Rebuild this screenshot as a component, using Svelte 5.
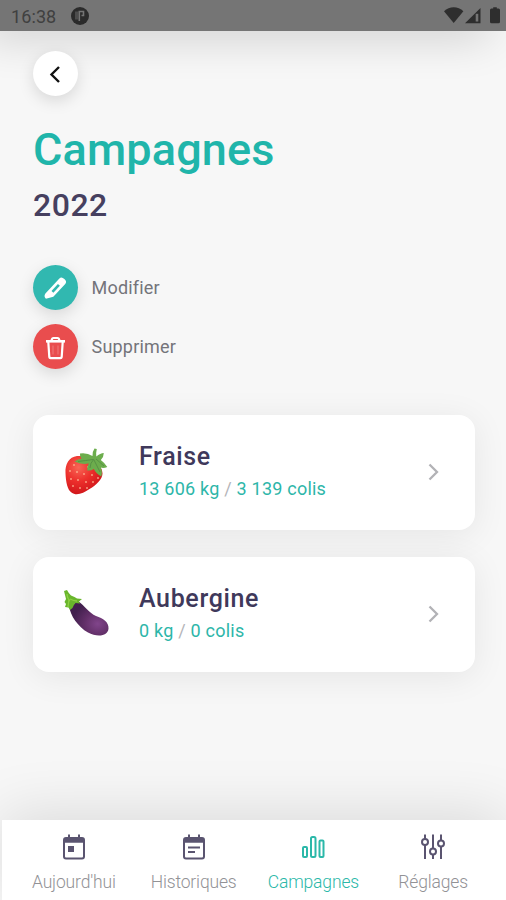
<script lang="ts">
	type Tab = 'today' | 'history' | 'campaigns' | 'settings';

	interface Crop {
		id: string;
		name: string;
		weight: string;
		packages: string;
	}

	const crops: Crop[] = [
		{ id: 'strawberry', name: 'Fraise', weight: '13 606 kg', packages: '3 139 colis' },
		{ id: 'eggplant', name: 'Aubergine', weight: '0 kg', packages: '0 colis' }
	];

	const tabs: { id: Tab; label: string }[] = [
		{ id: 'today', label: "Aujourd'hui" },
		{ id: 'history', label: 'Historiques' },
		{ id: 'campaigns', label: 'Campagnes' },
		{ id: 'settings', label: 'Réglages' }
	];

	// x, y of each strawberry seed
	const seeds = [
		[10, 18], [17, 15], [24, 20], [6, 24], [13, 25], [20, 27], [28, 28], [34, 31],
		[7, 32], [14, 33], [22, 35], [29, 35], [9, 39], [16, 41], [23, 41]
	];

	let activeTab = $state<Tab>('campaigns');
</script>

<div class="screen">
	<header class="status-bar">
		<span class="time">16:38</span>
		<svg class="app-dot" width="18" height="18" viewBox="0 0 18 18">
			<circle cx="9" cy="9" r="9" fill="#2b2b2b" />
			<path d="M4 4.500h3.200v8H4z" fill="#4c4c4c" />
			<path d="M8.300 14V4.500h4.200v4h-2" fill="none" stroke="#747474" stroke-width="1.600" />
		</svg>
		<svg class="system" width="58" height="18" viewBox="0 0 58 18" fill="#2e2e2e">
			<path d="M0 4.2C5.5-1 14-1 19.4 4.2L9.7 16z" />
			<path d="M21 16.2 36.5 1v15.2z" />
			<path d="M33 6.800v7.700" stroke="#747474" stroke-width="2.600" />
			<path d="M46 3q0-1.5 1.5-1.5h1.7V.2h3.6v1.3h1.7Q56 1.500 56 3v11.700q0 1.500-1.500 1.500h-7Q46 16.200 46 14.700z" />
		</svg>
	</header>

	<main class="content">
		<button class="round back" aria-label="Retour">
			<svg width="45" height="45" viewBox="0 0 45 45" fill="none" stroke="#111" stroke-width="2.400">
				<path d="m26 16-7.500 7.500L26 31" />
			</svg>
		</button>

		<h1>Campagnes</h1>
		<h2>2022</h2>

		<div class="actions">
			<button class="action">
				<span class="round edit">
					<svg width="45" height="45" viewBox="0 0 45 45">
						<g transform="rotate(43 22.500 23.500)">
							<path d="M18.500 13.500q0-3 4-3t4 3v17.500l-4 6.500q-3.500 0-4-3.500z" fill="#fff" />
							<path d="M22.500 18.500v9.500" stroke="#31b8b0" stroke-width="2.600" />
						</g>
					</svg>
				</span>
				<span>Modifier</span>
			</button>
			<button class="action">
				<span class="round delete">
					<svg width="45" height="45" viewBox="0 0 45 45" fill="none" stroke="#fff" stroke-width="2.200" stroke-linejoin="round">
						<path d="M13 17.300h19" stroke-width="2.600" />
						<path d="M18.500 16.500q.5-2.500 2-2.500h4q1.500 0 2 2.500" />
						<path d="M15.300 18l1 15q.2 1.200 1.200 1.200h10q1 0 1.200-1.200l1-15" />
						<path d="M20 21.500v9M25 21.500v9" stroke="#f07a79" stroke-width="1" />
					</svg>
				</span>
				<span>Supprimer</span>
			</button>
		</div>

		<div class="cards">
			{#each crops as crop (crop.id)}
				<article class="card">
					{#if crop.id === 'strawberry'}
						<svg class="crop" width="46" height="50" viewBox="0 0 46 50">
							<defs>
								<radialGradient id="berry" cx=".35" cy=".3" r=".8">
									<stop offset="0" stop-color="#f86656" />
									<stop offset=".45" stop-color="#ed302c" />
									<stop offset="1" stop-color="#c90f16" />
								</radialGradient>
							</defs>
							<path d="M13 9C5 10 1 17 1.500 26c.3 9 2 17 6 19.500 5 4 12 .5 18-3.500 7-4 13-10 13-15.500 0-8-10-18-25.500-17.500z" fill="url(#berry)" />
							{#each seeds as [x, y]}
								<ellipse cx={x} cy={y} rx=".75" ry="1.050" fill="#ffc09b" />
							{/each}
							<path d="M28.500 9Q28.500 4 30.500 1.500l2.300.5q-1 4-.5 7.500 4-3.500 7.500-3.500 0 4-3 7 4 3 6.500 7-4 1.500-6.500.5 2 5 .5 9-5-2.500-7.500-7.500-3 2-6.500 1.500-.5-4 1.500-7Q17 18 10.500 14.500q3.500-2.500 7-2.800-2-2.200-1.500-5.200Q23 5.500 28.500 9z" fill="#6cad4d" />
							<path d="M14 14.500q8-1 15-2M30 13l6 12M32 12l8 7M30 12q-4 4-4 9" stroke="#558f43" stroke-width=".9" fill="none" />
						</svg>
					{:else}
						<svg class="crop" width="46" height="50" viewBox="0 0 46 50">
							<defs>
								<radialGradient id="plum" cx=".72" cy=".66" r=".65">
									<stop offset="0" stop-color="#81458b" />
									<stop offset=".5" stop-color="#633069" />
									<stop offset="1" stop-color="#42204e" />
								</radialGradient>
							</defs>
							<path d="M5.500 18C6 26 14 38 24 43.500c9 5 20 4 20.500-4C45 33 39 29.500 32 27 25 24 21 17 14 12z" fill="url(#plum)" />
							<path d="M0 2 3 1q2 4 4 5.500Q11 8 13 9.500l5 .5-3 2.500 1 2-4.500-.5q-2 2-3 5L6 21l-1.500-2.500-3.500-.5 1-3-1.500-2 1.500-3Q1 6 0 2z" fill="#69b62c" />
							<path d="M3 5q.5 5 3 7M5 10l-1 8M6 10q4 2 7 2" stroke="#8ed043" stroke-width="1.300" fill="none" />
						</svg>
					{/if}
					<div class="details">
						<h3>{crop.name}</h3>
						<p>{crop.weight} <span>/</span> {crop.packages}</p>
					</div>
					<svg width="12" height="18" viewBox="0 0 12 18" fill="none" stroke="#b2b2b6" stroke-width="2.300">
						<path d="m1.500 1.500 7.500 7.500-7.500 7.500" />
					</svg>
				</article>
			{/each}
		</div>
	</main>

	<nav class="tab-bar">
		{#each tabs as tab (tab.id)}
			<button class="tab" class:active={activeTab === tab.id} onclick={() => (activeTab = tab.id)}>
				<svg width="26" height="28" viewBox="0 0 26 28" fill="none" stroke="currentColor" stroke-width="2">
					{#if tab.id === 'today' || tab.id === 'history'}
						<rect x="3" y="5" width="20" height="20.500" rx="2" />
						<path d="M3 7.500h20" stroke-width="4.500" />
						<path d="M8 1.500V6M18 1.500V6" />
						{#if tab.id === 'today'}
							<rect x="7" y="13" width="6" height="6" fill="currentColor" stroke="none" />
						{:else}
							<path d="M7 14.500h12M7 19h7" />
						{/if}
					{:else if tab.id === 'campaigns'}
						<rect x="3" y="14" width="4" height="10" rx="1" />
						<rect x="11" y="4" width="4.500" height="20" rx="1.500" />
						<rect x="19.500" y="7.500" width="4" height="16.500" rx="1" />
					{:else}
						<path d="M5 1.500v4.500m0 6v14M13 1.500v14m0 6v4.500M21 1.500v6m0 6v12.500" />
						<circle cx="5" cy="9" r="3" />
						<circle cx="13" cy="18.500" r="3" />
						<circle cx="21" cy="10.500" r="3" />
					{/if}
				</svg>
				<span>{tab.label}</span>
			</button>
		{/each}
	</nav>
</div>

<style>
	:global(body) {
		background: #f7f7f7;
	}

	.screen {
		display: flex;
		flex-direction: column;
		height: 900px;
		overflow: hidden;
		background: #f7f7f7;
		font-family: Roboto, 'Liberation Sans', sans-serif;
	}

	.status-bar {
		display: flex;
		align-items: center;
		flex: none;
		height: 31px;
		box-sizing: border-box;
		padding: 1px 4px 0 11px;
		background: #757575;
		box-shadow: -16px 4px 46px rgba(0, 0, 0, 0.2);
	}

	.time {
		width: 60px;
		font-size: 18px;
		letter-spacing: 0.1px;
		color: #404040;
	}

	.system {
		margin-left: auto;
	}

	.content {
		flex: 1;
		padding: 20px 31px 0 33px;
	}

	button {
		padding: 0;
		border: 0;
		background: none;
		font: inherit;
	}

	svg {
		display: block;
		flex: none;
	}

	.round {
		display: block;
		width: 45px;
		height: 45px;
		border-radius: 50%;
		box-shadow: 0 5px 16px rgba(0, 0, 0, 0.13);
	}

	.back {
		background: #fff;
	}

	.edit {
		background: #31b8b0;
	}

	.delete {
		background: #e94d4e;
	}

	h1,
	h2,
	h3,
	p {
		margin: 0;
		font-weight: 470;
	}

	h1 {
		margin-top: 27px;
		font-size: 45px;
		line-height: 54px;
		letter-spacing: 0.15px;
		color: #20b5aa;
	}

	h2 {
		margin-top: 8px;
		font-size: 32px;
		line-height: 40px;
		letter-spacing: 0.5px;
		color: #46405f;
	}

	.actions {
		display: flex;
		flex-direction: column;
		gap: 14px;
		margin-top: 40px;
	}

	.action {
		display: flex;
		align-items: center;
		gap: 13.5px;
		font-size: 18px;
		letter-spacing: 0.2px;
		color: #74747a;
	}

	.cards {
		display: flex;
		flex-direction: column;
		gap: 27px;
		margin-top: 46px;
	}

	.card {
		display: flex;
		align-items: center;
		height: 115px;
		box-sizing: border-box;
		padding: 0 35px 1px 31px;
		border-radius: 16px;
		background: #fff;
		box-shadow: 0 5px 34px rgba(0, 0, 0, 0.075);
	}

	.details {
		flex: 1;
		margin-left: 29px;
	}

	h3 {
		font-size: 25px;
		line-height: 32px;
		letter-spacing: 0.65px;
		color: #3f395b;
	}

	p {
		margin-top: 2px;
		font-size: 18px;
		font-weight: 380;
		line-height: 28px;
		letter-spacing: 0.22px;
		color: #2db6a9;
	}

	p span {
		color: #b5b5b9;
	}

	.tab-bar {
		display: flex;
		flex: none;
		height: 80px;
		margin-left: 2px;
		padding: 0 13px 0 12px;
		background: #fff;
		box-shadow: 0 -6px 60px rgba(0, 0, 0, 0.12);
	}

	.tab {
		display: flex;
		flex: 1;
		flex-direction: column;
		align-items: center;
		padding-top: 13px;
		color: #5a5470;
	}

	.tab span {
		margin-top: 11px;
		font-size: 17.5px;
		font-weight: 300;
		line-height: 20px;
		letter-spacing: -0.15px;
		color: #929296;
	}

	.tab.active,
	.tab.active span {
		color: #2bb8a9;
	}
</style>
